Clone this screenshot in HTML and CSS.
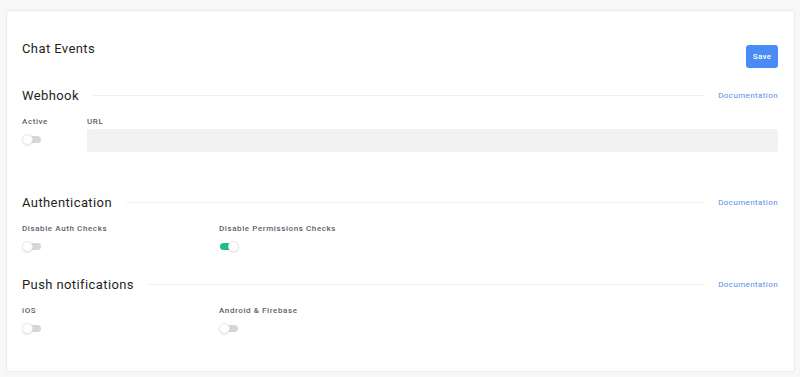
FILE: index.html
```html
<!DOCTYPE html>
<html>
<head>
   <title>Chat Events</title>
   <link rel="stylesheet" href="styles.css">
</head>
<body>
<div class="card">
   <div class="card-head">
      <h1>Chat Events</h1>
      <button class="btn-save" type="button">Save</button>
   </div>

   <div class="section section-webhook">
      <div class="section-head">
         <h2>Webhook</h2>
         <span class="rule"></span>
         <a href="#" class="doc-link">Documentation</a>
      </div>
      <div class="row row-webhook">
         <div class="field">
            <label>Active</label>
            <span class="toggle"></span>
         </div>
         <div class="field field-url">
            <label>URL</label>
            <input class="url-input" type="text" value="">
         </div>
      </div>
   </div>

   <div class="section">
      <div class="section-head">
         <h2>Authentication</h2>
         <span class="rule"></span>
         <a href="#" class="doc-link">Documentation</a>
      </div>
      <div class="row">
         <div class="field">
            <label>Disable Auth Checks</label>
            <span class="toggle"></span>
         </div>
         <div class="field">
            <label>Disable Permissions Checks</label>
            <span class="toggle on"></span>
         </div>
      </div>
   </div>

   <div class="section">
      <div class="section-head">
         <h2>Push notifications</h2>
         <span class="rule"></span>
         <a href="#" class="doc-link">Documentation</a>
      </div>
      <div class="row">
         <div class="field">
            <label>iOS</label>
            <span class="toggle"></span>
         </div>
         <div class="field">
            <label>Android &amp; Firebase</label>
            <span class="toggle"></span>
         </div>
      </div>
   </div>
</div>
</body>
</html>
```

FILE: styles.css
```css
html, body {
      background: #f8f8f8;
}
body {
      margin: 0;
      padding: 10px 5px 5px 6px;
      font-family: Roboto, "Liberation Sans", sans-serif;
      color: #1f1f24;
}

.card {
      background: #fff;
      border: 1px solid #ececec;
      border-radius: 3px;
      box-shadow: 0 0 2px rgba(0,0,0,0.03);
      padding: 30px 16px 38px 15px;
      height: 292px;
}

.card-head {
      display: flex;
      justify-content: space-between;
      align-items: flex-start;
}
.card-head h1 {
      margin: 0;
      font-size: 13px;
      font-weight: 400;
      line-height: 16px;
      letter-spacing: 0.4px;
}

.btn-save {
      margin-top: 4px;
      width: 32px;
      height: 23px;
      padding: 0;
      border: 0;
      border-radius: 3px;
      background: #4a8cf6;
      color: #fff;
      font-family: inherit;
      font-size: 8px;
      font-weight: 500;
      letter-spacing: 0.3px;
}

.section {
      margin-top: 24px;
}
.section-webhook {
      margin-top: 19px;
      margin-bottom: 42px;
}

.section-head {
      display: flex;
      align-items: center;
      height: 16px;
}
.section-head h2 {
      margin: 0;
      font-size: 13px;
      font-weight: 400;
      letter-spacing: 0.4px;
      white-space: nowrap;
}
.rule {
      flex: 1;
      height: 1px;
      background: #f0f0f0;
      margin: 0 13px 0 14px;
}
.doc-link {
      color: #5a8de3;
      text-decoration: none;
      font-size: 8px;
      letter-spacing: 0.4px;
}

.row {
      display: grid;
      grid-template-columns: 197px 1fr;
      margin-top: 14px;
}
.row-webhook {
      grid-template-columns: 65px 1fr;
}

.field label {
      display: block;
      font-size: 8px;
      line-height: 10px;
      font-weight: 500;
      color: #5c5f6a;
      letter-spacing: 0.6px;
}

.url-input {
      display: block;
      box-sizing: border-box;
      width: 100%;
      height: 23px;
      margin-top: 2px;
      border: 0;
      border-radius: 2px;
      background: #f2f2f2;
}

.toggle {
      display: block;
      position: relative;
      width: 20px;
      height: 11px;
      margin-top: 7px;
}
.toggle:before {
      content: "";
      position: absolute;
      left: 1px;
      top: 2px;
      width: 18px;
      height: 7px;
      border-radius: 4px;
      background: #d6d6d6;
}
.toggle:after {
      content: "";
      position: absolute;
      left: 0;
      top: 0;
      width: 9px;
      height: 9px;
      border-radius: 50%;
      background: #fff;
      border: 1px solid #e6e6e6;
      box-shadow: 0 1px 2px rgba(0,0,0,0.08);
}
.toggle.on:before {
      background: #1fbf85;
}
.toggle.on:after {
      left: 9px;
}
```
